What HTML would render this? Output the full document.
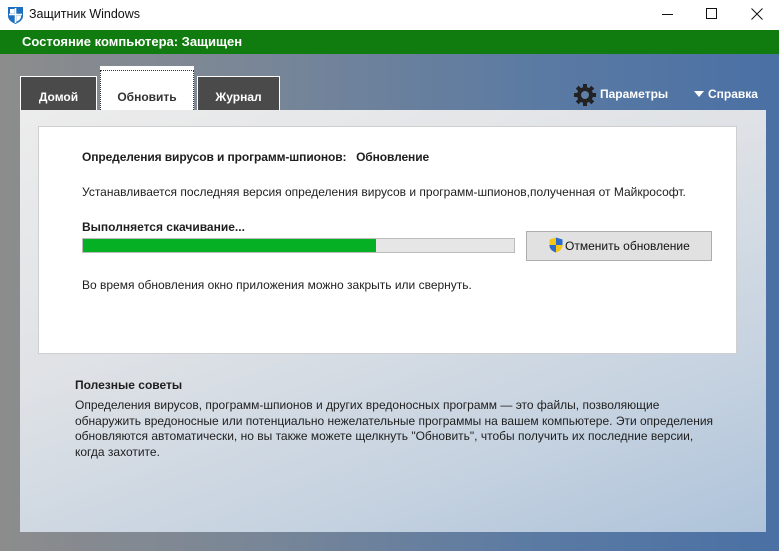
<!DOCTYPE html>
<html><head><meta charset="utf-8"><style>
*{margin:0;padding:0;box-sizing:border-box}
body{width:779px;height:551px;overflow:hidden;position:relative;font-family:"Liberation Sans","DejaVu Sans",sans-serif;background:linear-gradient(90deg,#8c8c8c 0%,#7b8796 30%,#5a7aa3 70%,#4a70a4 100%)}
.abs{position:absolute;white-space:nowrap}
.tb{left:0;top:0;width:779px;height:30px;background:#fff}
.gb{left:0;top:30px;width:779px;height:24px;background:#107c10;color:#fff;font-weight:bold;font-size:13px;padding:4px 0 0 22px}
.tab{position:absolute;font-weight:bold;font-size:12px;text-align:center}
.panel{left:20px;top:110px;width:746px;height:422px;background:linear-gradient(160deg,#ececec 0%,#dfe2e6 40%,#c5d2e0 75%,#aec3da 100%)}
.box{left:38px;top:126px;width:699px;height:228px;background:#fff;border:1px solid #cfcfcf}
.t{font-size:12px;color:#1e1e1e}
</style></head><body>
<div class="abs tb"></div>
<svg class="abs" style="left:7px;top:6px" width="17" height="18" viewBox="0 0 17 18"><path d="M1 1h15v9c0 4-4 6.5-7.5 8C5 16.5 1 14 1 10z" fill="#1e6fbf"/><path d="M8.5 2v15M2 8.5h13" stroke="#fff" stroke-width="1.6"/><path d="M3 3h4.5v4.5H3zM9.5 9.5h4.5v1C14 13 11.5 15 9.5 15.5z" fill="#fff"/></svg>
<div class="abs" style="left:29px;top:7px;font-size:12.5px;color:#111">Защитник Windows</div>
<div class="abs" style="left:662px;top:14px;width:11px;height:1px;background:#111"></div>
<div class="abs" style="left:706px;top:8px;width:11px;height:11px;border:1px solid #111"></div>
<svg class="abs" style="left:751px;top:8px" width="12" height="12"><path d="M0.5 0.5l11 11M11.5 0.5l-11 11" stroke="#111"/></svg>
<div class="abs gb">Состояние компьютера: Защищен</div>
<div class="tab" style="left:20px;top:76px;width:77px;height:34px;background:#4a4a4a;border:1px solid #fff;border-bottom:none;color:#fff;padding-top:13px">Домой</div>
<div class="tab" style="left:100px;top:66px;width:94px;height:44px;background:#fff;padding-top:4px"><div style="border:1px dotted #333;border-bottom:none;height:40px;padding-top:19px;color:#333">Обновить</div></div>
<div class="tab" style="left:197px;top:76px;width:83px;height:34px;background:#4a4a4a;border:1px solid #fff;border-bottom:none;color:#fff;padding-top:13px">Журнал</div>
<svg class="abs" style="left:573px;top:83px" width="24" height="24" viewBox="0 0 24 24"><g fill="#222"><circle cx="12" cy="12" r="8"/><g id="t"><rect x="10" y="1" width="4" height="5"/><rect x="10" y="18" width="4" height="5"/></g><use href="#t" transform="rotate(45 12 12)"/><use href="#t" transform="rotate(90 12 12)"/><use href="#t" transform="rotate(135 12 12)"/></g><circle cx="12" cy="12" r="4" fill="#5f7fa8"/></svg>
<div class="abs" style="left:600px;top:87px;font-size:12px;font-weight:bold;color:#fff">Параметры</div>
<svg class="abs" style="left:694px;top:91px" width="10" height="7"><path d="M0 0h10L5 6z" fill="#fff"/></svg>
<div class="abs" style="left:708px;top:87px;font-size:12px;font-weight:bold;color:#fff">Справка</div>
<div class="abs panel"></div>
<div class="abs box"></div>
<div class="abs t" style="left:82px;top:150px;font-weight:bold;letter-spacing:-0.1px">Определения вирусов и программ-шпионов:&nbsp;&nbsp; Обновление</div>
<div class="abs t" style="left:82px;top:185px">Устанавливается последняя версия определения вирусов и программ-шпионов,полученная от Майкрософт.</div>
<div class="abs t" style="left:82px;top:220px;font-weight:bold">Выполняется скачивание...</div>
<div class="abs" style="left:82px;top:238px;width:433px;height:15px;background:#e6e6e6;border:1px solid #bcbcbc"><div style="width:293px;height:13px;background:#06b025"></div></div>
<div class="abs" style="left:526px;top:231px;width:186px;height:30px;background:#e1e1e1;border:1px solid #adadad"></div>
<svg class="abs" style="left:549px;top:237px" width="14" height="16" viewBox="0 0 14 16"><path d="M7 .5L13.5 2.5V8H7z" fill="#2c6bc9"/><path d="M7 .5V8H.5V2.5z" fill="#f5c518"/><path d="M7 8h6.5v.5c0 3.5-3 6-6.5 7z" fill="#f5c518"/><path d="M7 8H.5v.5c0 3.5 3 6 6.5 7z" fill="#2c6bc9"/></svg>
<div class="abs t" style="left:565px;top:239px;color:#111">Отменить обновление</div>
<div class="abs t" style="left:82px;top:278px">Во время обновления окно приложения можно закрыть или свернуть.</div>
<div class="abs t" style="left:75px;top:378px;font-weight:bold">Полезные советы</div>
<div class="abs t" style="left:75px;top:398px;line-height:15.5px">Определения вирусов, программ-шпионов и других вредоносных программ — это файлы, позволяющие<br>обнаружить вредоносные или потенциально нежелательные программы на вашем компьютере. Эти определения<br>обновляются автоматически, но вы также можете щелкнуть "Обновить", чтобы получить их последние версии,<br>когда захотите.</div>
</body></html>
